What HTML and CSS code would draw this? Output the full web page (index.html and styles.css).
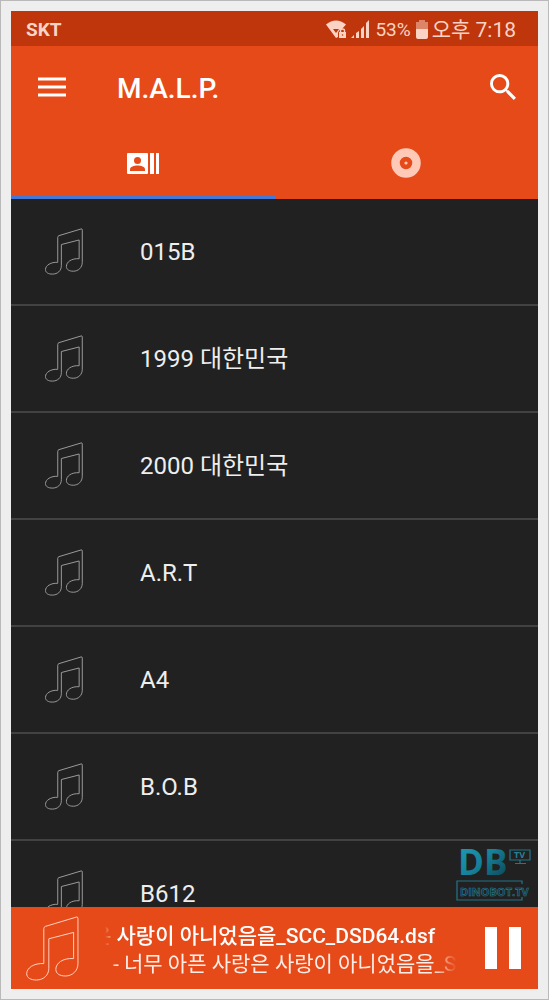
FILE: index.html
```html
<!DOCTYPE html>
<html lang="ko">
<head>
    <meta charset="UTF-8">
    <meta name="viewport" content="width=device-width, initial-scale=1.0">
    <title>M.A.L.P.</title>
    <link rel="stylesheet" href="styles.css">
</head>
<body>

    <!-- Shared music note outline -->
    <svg class="symbols" aria-hidden="true">
        <symbol id="note" viewBox="78 228 158 194">
            <path vector-effect="non-scaling-stroke" d="M131 368V266Q131 261 136 259L229 231Q233 230 233 236V370C233 392 216 407 196 407C178 407 167 400 167 387C167 369 187 353 220 355V277L146 296V384C146 405 130 419 109 419C91 419 80 412 80 400C80 383 102 368 131 370Z"/>
        </symbol>
    </svg>

    <div class="screen">
        <div class="status-bar">
            <span class="carrier">SKT</span>
            <svg class="wifi" width="21" height="19" viewBox="0 0 21 19" aria-hidden="true">
                <path fill="currentColor" d="M0 4.500Q10 -3.500 20 4.500L16 9Q13 9 12 13V17L10 18Z"/>
                <path class="cutout" d="M7 9H13L10 13Z"/>
                <path fill="currentColor" d="M13 12H20V18H13Z"/>
                <path fill="none" stroke="currentColor" stroke-width="1.4" d="M14.500 12V10.500Q14.500 9 16.500 9Q18.500 9 18.500 10.500V12"/>
                <circle class="cutout" cx="16.500" cy="15" r="0.8"/>
            </svg>
            <svg class="signal" width="19" height="19" viewBox="0 0 19 19" aria-hidden="true">
                <path fill="currentColor" d="M0 18L3 15V18ZM5 13L8 11V18H5ZM10 9L13 6V18H10ZM15 3L18 0V18H15Z"/>
            </svg>
            <span class="percent">53%</span>
            <svg class="battery" width="12" height="19" viewBox="0 0 12 19" aria-hidden="true">
                <path fill="currentColor" opacity="0.5" d="M3 0H9V2H12V9H0V2H3Z"/>
                <path fill="currentColor" d="M0 9H12V17Q12 19 10 19H2Q0 19 0 17Z"/>
            </svg>
            <span class="clock">오후 7:18</span>
        </div>

        <header class="app-bar">
            <button class="icon-button" aria-label="Menu">
                <svg width="28" height="20" viewBox="0 0 28 20"><path fill="currentColor" d="M0 0.500H28V3.500H0ZM0 8.500H28V11.500H0ZM0 16.500H28V19.500H0Z"/></svg>
            </button>
            <h1 class="app-title">M.A.L.P.</h1>
            <button class="icon-button" aria-label="Search">
                <svg width="26" height="26" viewBox="3 3 17.5 17.5"><path fill="currentColor" d="M15.500 14h-.79l-.28-.27A6.470 6.470 0 0 0 16 9.500 6.500 6.500 0 1 0 9.500 16c1.610 0 3.090-.59 4.230-1.570l.27.28v.79l5 4.990L20.490 19l-4.990-5zm-6 0C7.010 14 5 11.990 5 9.500S7.010 5 9.500 5 14 7.010 14 9.500 11.990 14 9.500 14z"/></svg>
            </button>
        </header>

        <nav class="tabs">
            <button class="tab active" aria-label="Artists">
                <svg width="32" height="21" viewBox="0 0 32 21">
                    <path fill="currentColor" d="M1 0H20Q21 0 21 1V20Q21 21 20 21H1Q0 21 0 20V1Q0 0 1 0ZM23 0H27V21H23ZM29 0H32V21H29Z"/>
                    <circle class="person" cx="10.500" cy="7.500" r="3.500"/>
                    <path class="person" d="M3 18V16.500C3 13.500 7 12.500 10.500 12.500S18 13.500 18 16.500V18Z"/>
                </svg>
            </button>
            <button class="tab" aria-label="Albums">
                <svg width="30" height="30" viewBox="0 0 30 30">
                    <circle cx="15" cy="15" r="10.500" fill="none" stroke="currentColor" stroke-width="8.500"/>
                    <circle cx="15" cy="15" r="1.600" fill="currentColor"/>
                </svg>
            </button>
        </nav>

        <main class="artists">
            <ul class="artist-list">
                <li class="artist"><svg class="note"><use href="#note"/></svg><span>015B</span></li>
                <li class="artist"><svg class="note"><use href="#note"/></svg><span>1999 대한민국</span></li>
                <li class="artist"><svg class="note"><use href="#note"/></svg><span>2000 대한민국</span></li>
                <li class="artist"><svg class="note"><use href="#note"/></svg><span>A.R.T</span></li>
                <li class="artist"><svg class="note"><use href="#note"/></svg><span>A4</span></li>
                <li class="artist"><svg class="note"><use href="#note"/></svg><span>B.O.B</span></li>
                <li class="artist"><svg class="note"><use href="#note"/></svg><span>B612</span></li>
            </ul>

            <svg class="watermark" width="78" height="56" viewBox="0 0 78 56" role="img" aria-label="DB TV, DINOBOT.TV">
                <defs>
                    <linearGradient id="teal" x1="0" y1="0" x2="1" y2="1">
                        <stop offset="0" stop-color="#1f9fbd"/>
                        <stop offset="0.5" stop-color="#177f99"/>
                        <stop offset="1" stop-color="#0a3a48"/>
                    </linearGradient>
                </defs>
                <text class="logo-db" x="2" y="28" fill="url(#teal)">DB</text>
                <path class="logo-line" d="M54 3H74V13H54ZM64 13V16M59 16.500H70"/>
                <text class="logo-tv" x="58" y="11">TV</text>
                <path class="logo-line" d="M66 37V34H1V53H66V50"/>
                <text class="logo-name" x="4" y="49">DINOBOT.TV</text>
            </svg>
        </main>

        <footer class="player">
            <svg class="note cover"><use href="#note"/></svg>
            <div class="track">
                <p class="track-title">은 사랑이 아니었음을_SCC_DSD64.dsf</p>
                <p class="track-info">- 너무 아픈 사랑은 사랑이 아니었음을_SC</p>
            </div>
            <button class="icon-button" aria-label="Pause">
                <svg width="36" height="42" viewBox="0 0 36 42"><path fill="currentColor" d="M0 0H12V42H0ZM24 0H36V42H24Z"/></svg>
            </button>
        </footer>
    </div>

</body>
</html>
```
FILE: styles.css
```css
:root {
    --primary: #e64a19;
    --primary-dark: #bf360c;
    --accent: #4478d8;
    --surface: #212121;
    --divider: #424242;
    --status-text: #fbd3c5;
}

* {
    box-sizing: border-box;
}

body {
    margin: 0;
    height: 100vh;
    padding: 10px;
    border: 1px solid #b9b9b9;
    background-color: #eeeeee;
    font-family: Roboto, "Noto Sans CJK KR", sans-serif;
    color: #fff;
}

svg {
    display: block;
    flex-shrink: 0;
}

button {
    border: none;
    background: none;
    padding: 0;
    color: inherit;
    cursor: pointer;
}

.symbols {
    position: absolute;
    width: 0;
    height: 0;
}

.screen {
    height: 100%;
    display: flex;
    flex-direction: column;
    background-color: var(--surface);
}

/* Status bar */
.status-bar {
    height: 35px;
    flex-shrink: 0;
    display: flex;
    align-items: center;
    padding: 2px 22px 0 15px;
    background-color: var(--primary-dark);
    color: var(--status-text);
    white-space: nowrap;
}

.carrier {
    flex: 1;
    font-size: 19px;
    font-weight: 700;
}

.wifi {
    margin-right: 4px;
}

.signal {
    margin-right: 5px;
}

.cutout {
    fill: var(--primary-dark);
}

.percent {
    font-size: 19px;
    margin-right: 5px;
}

.battery {
    margin-right: 4px;
}

.clock {
    font-size: 21px;
    line-height: 24px;
}

/* App bar */
.app-bar {
    height: 82px;
    flex-shrink: 0;
    display: flex;
    align-items: center;
    padding: 0 22px 0 27px;
    background-color: var(--primary);
}

.app-title {
    flex: 1;
    margin: 0 0 0 51px;
    padding-top: 2px;
    font-size: 28px;
    font-weight: 500;
}

.tabs {
    height: 71px;
    flex-shrink: 0;
    display: flex;
    background-color: var(--primary);
}

.tab {
    flex: 1;
    display: flex;
    align-items: center;
    justify-content: center;
    padding-top: 2px;
    border-bottom: 3px solid transparent;
    color: #ffc9b8;
}

.tab.active {
    color: #fff;
    border-bottom-color: var(--accent);
}

.person {
    fill: var(--primary);
}

/* Artist list */
.artists {
    position: relative;
    flex: 1;
    min-height: 0;
    overflow: hidden;
}

.artist-list {
    list-style: none;
    margin: 0;
    padding: 0;
}

.artist {
    height: 107px;
    display: flex;
    align-items: center;
    gap: 57px;
    padding: 0 34px;
    border-bottom: 2px solid var(--divider);
    font-size: 24px;
    line-height: 28px;
    color: #eeeeee;
}

.note {
    width: 38px;
    height: 47px;
    fill: none;
    stroke: #9a9a9a;
    stroke-width: 1px;
}

.watermark {
    position: absolute;
    right: 4px;
    bottom: 4px;
}

.logo-db {
    font: 700 35px "Open Sans", sans-serif;
}

.logo-tv {
    font: 700 9px "Open Sans", sans-serif;
    fill: #2b7f95;
}

.logo-name {
    font: 700 11px "Open Sans", sans-serif;
    fill: #102c35;
    stroke: #2b7f95;
    stroke-width: 0.6px;
}

.logo-line {
    fill: none;
    stroke: #25758a;
    stroke-width: 1.2px;
}

/* Now playing */
.player {
    height: 82px;
    flex-shrink: 0;
    display: flex;
    align-items: center;
    padding: 0 17px 0 15px;
    background-color: var(--primary);
}

.cover {
    width: 53px;
    height: 65px;
    stroke: #ffd0bf;
}

.track {
    flex: 1;
    min-width: 0;
    margin: 0 28px 0 26px;
    padding-top: 3px;
    overflow: hidden;
    white-space: nowrap;
    font-size: 21px;
    line-height: 28px;
    -webkit-mask-image: linear-gradient(90deg, transparent, #000 12px, #000 calc(100% - 24px), transparent);
    mask-image: linear-gradient(90deg, transparent, #000 12px, #000 calc(100% - 24px), transparent);
}

.track p {
    margin: 0;
}

.track-title {
    font-weight: 500;
    text-indent: -13px;
}

.track-info {
    text-indent: 8px;
    color: #ffeee8;
}
```
